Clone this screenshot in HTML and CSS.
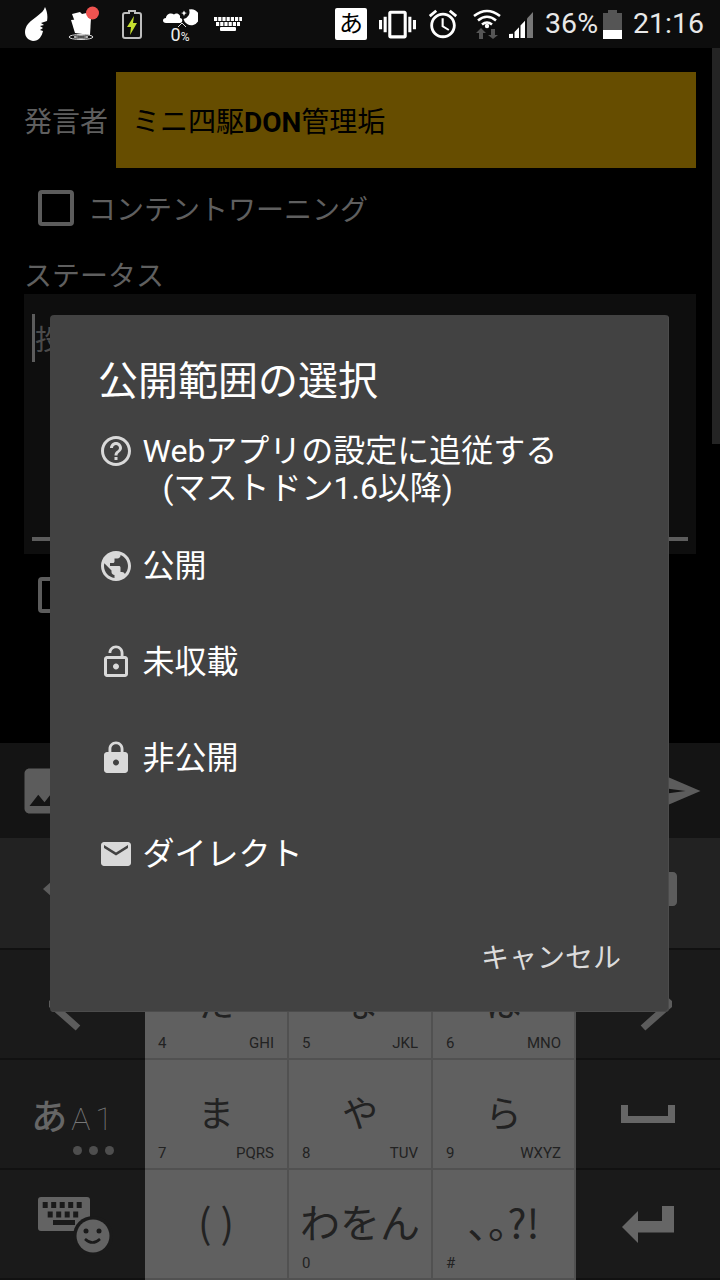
FILE: index.html
```html
<!DOCTYPE html>
<html lang="ja">
<head>
    <meta charset="UTF-8">
    <meta name="viewport" content="width=device-width, initial-scale=1.0">
    <title>公開範囲の選択</title>
    <link rel="stylesheet" href="styles.css">
</head>
<body>
    <!-- Statusbalk -->
    <div class="status-bar">
        <div class="status-cell">
            <svg width="24" height="34" viewBox="0 0 24 34"><path fill="#fff" d="M21 0C19 7 10 10 4 17C-1 23 0 33 9 34C15 34 18 29 19 24L16 23L19 21L16 19L20 18L17 16L23 14C24 9 23 4 21 0Z"/></svg>
        </div>
        <div class="status-cell">
            <svg width="36" height="40" viewBox="0 0 36 40">
                <path fill="#fff" d="M6 10L14 8L16 10L25 8L27 14L9 18Z"/>
                <path fill="#fff" d="M5 16L25 14L24 31L9 29Z"/>
                <ellipse cx="15" cy="33" rx="12" ry="2.5" fill="none" stroke="#ddd" stroke-width="1"/>
                <ellipse cx="15" cy="33" rx="7" ry="1.2" fill="none" stroke="#ddd" stroke-width="1"/>
                <circle cx="26.5" cy="9" r="6.5" fill="#ef5350"/>
            </svg>
        </div>
        <div class="status-cell">
            <svg width="20" height="30" viewBox="0 0 20 30">
                <path fill="none" stroke="#bdbdbd" stroke-width="2" d="M3 4H7V2H13V4H17C18 4 19 5 19 6V27C19 28 18 29 17 29H3C2 29 1 28 1 27V6C1 5 2 4 3 4Z"/>
                <path fill="#c6e02f" d="M12 7L5 18H9L8 26L15 14H11Z"/>
            </svg>
        </div>
        <div class="status-cell weather">
            <svg width="36" height="20" viewBox="0 0 36 20">
                <path fill="#fff" d="M4 15C0 15 0 10 4 10C4 6 9 4 12 6.500C14 4.500 19 6 18 10C21 10 21 15 18 15Z"/>
                <path fill="#fff" d="M27 1.500A8 8 0 1 1 21.500 11A7 7 0 0 0 27 1.500Z"/>
                <path fill="#fff" d="M22 2.500L23 4.500L25 5L23 5.800L22 8L21 5.800L19 5L21 4.500Z"/>
                <path fill="none" stroke="#ddd" stroke-width="1" d="M16 19L20 15L24 19"/>
            </svg>
            <span class="weather-value">0<small>%</small></span>
        </div>
        <div class="status-cell">
            <svg width="28" height="14" viewBox="0 0 28 14">
                <path fill="none" stroke="#fff" stroke-width="4" stroke-dasharray="3.2 1" d="M0 2H28M2 7H26"/>
                <rect x="6" y="10" width="16" height="4" rx="1" fill="#fff"/>
            </svg>
        </div>

        <div class="status-right">
            <span class="ime-badge">あ</span>
            <svg class="st-vibrate" width="37" height="37" viewBox="0 0 24 24"><path fill="#fff" d="M0 15h2V9H0v6zm3 2h2V7H3v10zm19-8v6h2V9h-2zm-3 8h2V7h-2v10zM16.5 3h-9C6.67 3 6 3.67 6 4.5v15c0 .83.67 1.5 1.5 1.5h9c.83 0 1.5-.67 1.5-1.5v-15c0-.83-.67-1.5-1.5-1.5zM16 19H8V5h8v14z"/></svg>
            <svg class="st-alarm" width="34" height="34" viewBox="0 0 24 24"><path fill="#fff" d="M22 5.72l-4.6-3.86-1.29 1.53 4.6 3.86L22 5.72zM7.88 3.39L6.6 1.86 2 5.71l1.29 1.53 4.59-3.85zM12.5 8H11v6l4.75 2.85.75-1.23-4-2.37V8zM12 4c-4.97 0-9 4.03-9 9s4.03 9 9 9c4.97 0 9-4.03 9-9s-4.03-9-9-9zm0 16c-3.87 0-7-3.13-7-7s3.13-7 7-7 7 3.13 7 7-3.13 7-7 7z"/></svg>
            <svg class="st-wifi" width="28" height="30" viewBox="0 0 28 30">
                <path fill="none" stroke="#fff" stroke-width="2.6" d="M1 7Q14 -3 27 7M5 11.5Q14 4 23 11.5M9 15.5Q14 11.5 19 15.5"/>
                <circle cx="14" cy="17" r="2.2" fill="#fff"/>
                <path fill="#555" d="M8 19L13 24H10V30H6V24H3ZM18 20H22V26H25L20 30L15 26H18Z"/>
            </svg>
            <svg class="st-signal" width="24" height="26" viewBox="0 0 24 26">
                <path fill="#fff" d="M0 26V22L4 21.7V26ZM5.5 26V20L10 15.2V26ZM11.5 26V13.6L16 8.7V26Z"/>
                <path fill="#777" d="M18 26V6.5L24 0V26Z"/>
            </svg>
            <span class="status-text st-percent">36%</span>
            <svg class="st-battery" width="19" height="29" viewBox="0 0 19 29">
                <path fill="#555" d="M5 0H14V3H19V20H0V3H5Z"/>
                <rect y="20" width="19" height="9" fill="#fff"/>
            </svg>
            <span class="status-text st-clock">21:16</span>
        </div>
    </div>

    <!-- Formulier achter de dialoog -->
    <div class="app">
        <div class="scrollbar"></div>
        <div class="speaker-row">
            <span class="speaker-label">発言者</span>
            <div class="speaker-name">ミニ四駆<b>DON</b>管理垢</div>
        </div>
        <div class="check-row">
            <span class="checkbox"></span>
            <span class="check-label">コンテントワーニング</span>
        </div>
        <div class="status-label">ステータス</div>
        <div class="status-field">
            <div class="hint-line"><span class="cursor"></span><span class="hint">投</span></div>
            <div class="underline"></div>
        </div>
        <div class="check-row check-row-second">
            <span class="checkbox"></span>
        </div>
    </div>

    <div class="toolbar">
        <svg width="60" height="60" viewBox="0 0 24 24"><path fill="#5c5c5c" d="M21 19V5c0-1.1-.9-2-2-2H5c-1.1 0-2 .9-2 2v14c0 1.1.9 2 2 2h14c1.1 0 2-.9 2-2zM8.5 13.5l2.5 3.01L14.5 12l4.5 6H5l3.5-4.5z"/></svg>
        <svg width="60" height="60" viewBox="0 0 24 24"><path fill="#5c5c5c" d="M2.01 21L23 12 2.01 3 2 10l15 2-15 2z"/></svg>
    </div>

    <!-- Toetsenbord -->
    <div class="keyboard">
        <div class="side-key side-key-top">
            <svg class="top-icon" width="60" height="40" viewBox="0 0 60 40"><path fill="#5c5c5c" d="M0 20L18 4V36Z"/></svg>
        </div>
        <div class="key"></div>
        <div class="key"></div>
        <div class="key"></div>
        <div class="side-key side-key-top">
            <svg class="top-icon" width="58" height="34" viewBox="0 0 58 34"><path fill="#5c5c5c" d="M14 0H54C56 0 58 2 58 4V30C58 32 56 34 54 34H14L0 17Z"/></svg>
        </div>

        <div class="side-key">
            <svg width="48" height="64" viewBox="0 0 48 64"><polyline fill="none" stroke="#5c5c5c" stroke-width="7" points="29,8 2,32 29,56"/></svg>
        </div>
        <div class="key"><span class="key-main">た</span><span class="key-foot"><span>4</span><span>GHI</span></span></div>
        <div class="key"><span class="key-main">な</span><span class="key-foot"><span>5</span><span>JKL</span></span></div>
        <div class="key"><span class="key-main">は</span><span class="key-foot"><span>6</span><span>MNO</span></span></div>
        <div class="side-key">
            <svg width="48" height="64" viewBox="0 0 48 64"><polyline fill="none" stroke="#5c5c5c" stroke-width="7" points="19,8 46,32 19,56"/></svg>
        </div>

        <div class="side-key mode-key">
            <span class="mode-label"><span class="mode-kana">あ</span><span class="mode-latin">A1</span></span>
            <span class="mode-dots"><i></i><i></i><i></i></span>
        </div>
        <div class="key"><span class="key-main">ま</span><span class="key-foot"><span>7</span><span>PQRS</span></span></div>
        <div class="key"><span class="key-main">や</span><span class="key-foot"><span>8</span><span>TUV</span></span></div>
        <div class="key"><span class="key-main">ら</span><span class="key-foot"><span>9</span><span>WXYZ</span></span></div>
        <div class="side-key">
            <svg width="54" height="18" viewBox="0 0 54 18"><path fill="none" stroke="#666" stroke-width="7" d="M3.500 0V14.500H50.500V0"/></svg>
        </div>

        <div class="side-key">
            <svg width="88" height="64" viewBox="0 0 88 64">
                <rect x="9" y="5" width="52" height="34" rx="3" fill="#636363"/>
                <path fill="none" stroke="#1a1a1a" stroke-width="6" stroke-dasharray="5 3.500" d="M13.700 13H56M18.700 22.500H52"/>
                <rect x="24" y="28" width="22" height="5" fill="#1a1a1a"/>
                <circle cx="64" cy="44" r="20" fill="#1a1a1a"/>
                <circle cx="64" cy="44" r="16.500" fill="#636363"/>
                <circle cx="57" cy="39" r="2.500" fill="#1a1a1a"/>
                <circle cx="70" cy="39" r="2.500" fill="#1a1a1a"/>
                <path fill="none" stroke="#1a1a1a" stroke-width="2.500" d="M56 47Q63.500 54 71 47"/>
            </svg>
        </div>
        <div class="key"><span class="key-main key-main-wide">( )</span><span class="key-foot"></span></div>
        <div class="key"><span class="key-main key-main-wide">わをん</span><span class="key-foot"><span>0</span></span></div>
        <div class="key"><span class="key-main key-main-wide key-main-punct">、。?!</span><span class="key-foot"><span>#</span></span></div>
        <div class="side-key">
            <svg width="52" height="37" viewBox="0 0 52 37"><path fill="#666" d="M0 21L16 5V15H40V0H52V26.500H16V37Z"/></svg>
        </div>
    </div>

    <!-- Dialoog -->
    <div class="dialog">
        <h2 class="dialog-title">公開範囲の選択</h2>
        <ul class="option-list">
            <li class="option">
                <svg class="option-icon" viewBox="0 0 24 24"><path d="M11 18h2v-2h-2v2zm1-16C6.48 2 2 6.48 2 12s4.48 10 10 10 10-4.48 10-10S17.52 2 12 2zm0 18c-4.41 0-8-3.59-8-8s3.59-8 8-8 8 3.59 8 8-3.59 8-8 8zm0-14c-2.21 0-4 1.79-4 4h2c0-1.1.9-2 2-2s2 .9 2 2c0 2-3 1.75-3 5h2c0-2.25 3-2.5 3-5 0-2.21-1.79-4-4-4z"/></svg>
                <span class="option-text">Webアプリの設定に追従する<span class="option-sub">(マストドン1.6以降)</span></span>
            </li>
            <li class="option">
                <svg class="option-icon" viewBox="0 0 24 24"><path d="M12 2C6.48 2 2 6.48 2 12s4.48 10 10 10 10-4.48 10-10S17.52 2 12 2zm-1 17.93c-3.95-.49-7-3.85-7-7.93 0-.62.08-1.21.21-1.79L9 15v1c0 1.1.9 2 2 2v1.93zm6.9-2.54c-.26-.81-1-1.39-1.9-1.39h-1v-3c0-.55-.45-1-1-1H8v-2h2c.55 0 1-.45 1-1V7h2c1.1 0 2-.9 2-2v-.41c2.93 1.19 5 4.06 5 7.41 0 2.08-.8 3.97-2.1 5.39z"/></svg>
                <span class="option-text">公開</span>
            </li>
            <li class="option">
                <svg class="option-icon" viewBox="0 0 24 24"><path d="M12 17c1.1 0 2-.9 2-2s-.9-2-2-2-2 .9-2 2 .9 2 2 2zm6-9h-1V6c0-2.76-2.24-5-5-5S7 3.24 7 6h1.9c0-1.71 1.39-3.1 3.1-3.1 1.71 0 3.1 1.39 3.1 3.1v2H6c-1.1 0-2 .9-2 2v10c0 1.1.9 2 2 2h12c1.1 0 2-.9 2-2V10c0-1.1-.9-2-2-2zm0 12H6V10h12v10z"/></svg>
                <span class="option-text">未収載</span>
            </li>
            <li class="option">
                <svg class="option-icon" viewBox="0 0 24 24"><path d="M18 8h-1V6c0-2.76-2.24-5-5-5S7 3.24 7 6v2H6c-1.1 0-2 .9-2 2v10c0 1.1.9 2 2 2h12c1.1 0 2-.9 2-2V10c0-1.1-.9-2-2-2zm-6 9c-1.1 0-2-.9-2-2s.9-2 2-2 2 .9 2 2-.9 2-2 2zm3.100-9H8.900V6c0-1.710 1.390-3.100 3.100-3.100 1.710 0 3.100 1.390 3.100 3.100v2z"/></svg>
                <span class="option-text">非公開</span>
            </li>
            <li class="option">
                <svg class="option-icon" viewBox="0 0 24 24"><path d="M20 4H4c-1.100 0-1.990.9-1.990 2L2 18c0 1.100.9 2 2 2h16c1.100 0 2-.9 2-2V6c0-1.100-.9-2-2-2zm0 4l-8 5-8-5V6l8 5 8-5v2z"/></svg>
                <span class="option-text">ダイレクト</span>
            </li>
        </ul>
        <div class="dialog-actions"><span class="cancel-btn">キャンセル</span></div>
    </div>
</body>
</html>
```

FILE: styles.css
```css
* {
    box-sizing: border-box;
}
body {
    margin: 0;
    width: 720px;
    height: 1280px;
    overflow: hidden;
    position: relative;
    display: flex;
    flex-direction: column;
    background-color: #000;
    font-family: Roboto, "Noto Sans CJK JP", sans-serif;
}

/* Statusbalk */
.status-bar {
    height: 48px;
    flex: none;
    display: flex;
    align-items: center;
    padding-left: 12px;
    background-color: #0d0d0d;
}
.status-cell {
    width: 48px;
    height: 48px;
    display: flex;
    flex-direction: column;
    align-items: center;
    justify-content: center;
}
.weather {
    justify-content: flex-start;
    padding-top: 8px;
}
.weather-value {
    color: #eee;
    font-size: 18px;
    line-height: 13px;
}
.weather-value small {
    font-size: 12px;
}
.status-right {
    margin-left: auto;
    display: flex;
    align-items: center;
    padding-right: 16px;
}
.ime-badge {
    width: 32px;
    height: 32px;
    background-color: #fff;
    border-radius: 2px;
    color: #000;
    font-size: 24px;
    line-height: 32px;
    text-align: center;
}
.st-vibrate { margin-left: 12px; }
.st-alarm { margin-left: 10px; }
.st-wifi { margin-left: 13px; }
.st-signal { margin-left: 8px; margin-top: 2px; }
.st-percent { margin-left: 12px; }
.st-battery { margin-left: 5px; }
.st-clock { margin-left: 11px; }
.status-text {
    color: #e8e8e8;
    font-size: 28.5px;
    line-height: 48px;
}

/* Formulier */
.app {
    height: 695px;
    flex: none;
    position: relative;
    padding: 24px 24px 0;
    background-color: #000;
    color: #5f5f5f;
    font-family: "Noto Sans CJK JP", sans-serif;
    font-size: 28px;
}
.scrollbar {
    position: absolute;
    top: 0;
    right: 0;
    width: 8px;
    height: 396px;
    background-color: #242424;
}
.speaker-row {
    display: flex;
    align-items: center;
    height: 96px;
}
.speaker-label {
    width: 92px;
}
.speaker-name {
    flex: 1;
    height: 96px;
    padding-left: 16px;
    background-color: #664d00;
    color: #000;
    line-height: 96px;
}
.speaker-name b {
    font-family: Roboto, sans-serif;
    font-weight: 700;
}
.check-row {
    display: flex;
    align-items: center;
    gap: 14px;
    height: 48px;
    margin-top: 16px;
    padding-left: 14px;
}
.checkbox {
    width: 36px;
    height: 36px;
    border: 4px solid #5c5c5c;
    border-radius: 4px;
}
.status-label {
    height: 38px;
    margin-top: 24px;
    line-height: 36px;
}
.status-field {
    height: 260px;
    display: flex;
    flex-direction: column;
    justify-content: space-between;
    padding: 20px 8px 13px;
    background-color: #0e0e0e;
}
.hint-line {
    display: flex;
    height: 48px;
    line-height: 48px;
    color: #4c4c4c;
}
.cursor {
    width: 3px;
    height: 48px;
    background-color: #5c5c5c;
}
.underline {
    height: 4px;
    background-color: #5c5c5c;
}
.check-row-second {
    margin-top: 0;
    height: 82px;
}

/* Balk boven het toetsenbord */
.toolbar {
    height: 95px;
    flex: none;
    display: flex;
    align-items: center;
    justify-content: space-between;
    padding: 0 17px;
    background-color: #141414;
}

/* Toetsenbord */
.keyboard {
    height: 442px;
    flex: none;
    display: grid;
    grid-template-columns: 145px 144px 144px 143px 144px;
    grid-template-rows: 112px 110px 110px 110px;
}
.side-key {
    display: flex;
    flex-direction: column;
    align-items: center;
    justify-content: center;
    background-color: #1a1a1a;
    border-bottom: 2px solid #111;
}
.side-key-top {
    background-color: #222;
}
.top-icon {
    margin-top: -8px;
}
.key {
    display: flex;
    flex-direction: column;
    padding-top: 19px;
    background-color: #606060;
    border-right: 2px solid #515151;
    border-bottom: 2px solid #515151;
    color: #222;
}
.key-main {
    flex: 1;
    display: flex;
    align-items: center;
    justify-content: center;
    font-family: "Noto Sans CJK JP", sans-serif;
    font-size: 36px;
    line-height: 1;
}
.key-main-wide {
    font-size: 40px;
}
.key-main-punct {
    font-feature-settings: "palt";
}
.key-foot {
    height: 26px;
    display: flex;
    justify-content: space-between;
    padding: 0 13px;
    font-size: 15px;
    line-height: 22px;
}
.mode-key {
    gap: 8px;
    padding-top: 18px;
    color: #666;
}
.mode-label {
    display: flex;
    align-items: baseline;
    margin-left: 4px;
}
.mode-kana {
    font-family: "Noto Sans CJK JP", sans-serif;
    font-size: 36px;
    font-weight: 500;
    line-height: 44px;
}
.mode-latin {
    color: #777;
    font-size: 32px;
    font-weight: 100;
    letter-spacing: 5px;
    margin-left: 4px;
}
.mode-dots {
    display: flex;
    gap: 7px;
    margin-left: 41px;
}
.mode-dots i {
    width: 9px;
    height: 9px;
    border-radius: 50%;
    background-color: #4e4e4e;
}

/* Dialoog */
.dialog {
    position: absolute;
    left: 50px;
    top: 315px;
    width: 619px;
    height: 697px;
    padding-top: 35px;
    background-color: #424242;
    border-radius: 4px;
    box-shadow: inset -1px -1px 0 #4c4c4c;
    font-family: "Noto Sans CJK JP", sans-serif;
    color: #fff;
}
.dialog-title {
    margin: 0;
    padding: 0 48px;
    height: 56px;
    font-size: 40px;
    font-weight: 400;
    line-height: 56px;
}
.option-list {
    list-style: none;
    margin: 16px 0 0;
    padding: 0 0 0 48px;
}
.option {
    height: 96px;
    display: flex;
    align-items: center;
    gap: 8.5px;
}
.option-icon {
    width: 36px;
    height: 36px;
    flex: none;
    fill: #d9d9d9;
}
.option:first-child .option-icon {
    align-self: flex-start;
    margin-top: 11px;
}
.option-text {
    font-family: Roboto, "Noto Sans CJK JP", sans-serif;
    font-size: 32px;
    line-height: 37px;
}
.option-sub {
    display: block;
    padding-left: 20px;
}
.dialog-actions {
    display: flex;
    justify-content: flex-end;
    margin-top: 31px;
    padding-right: 48px;
}
.cancel-btn {
    color: #dcdcdc;
    font-size: 28px;
    line-height: 46px;
}
```
